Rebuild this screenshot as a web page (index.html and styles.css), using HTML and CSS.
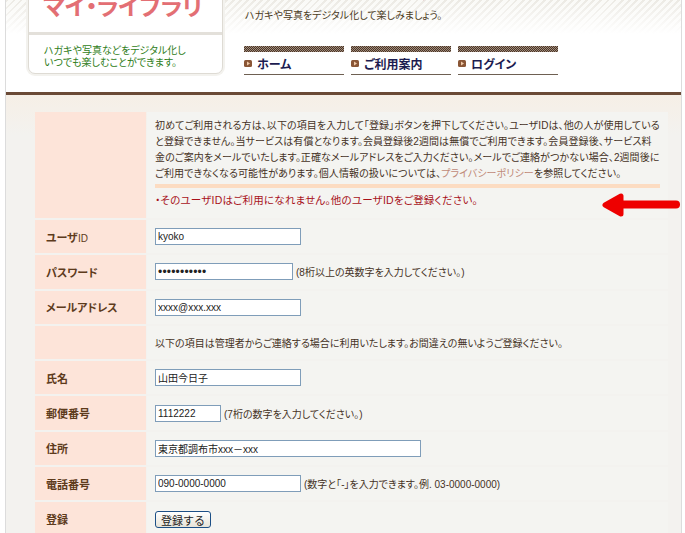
FILE: index.html
```html
<!DOCTYPE html>
<html lang="ja">
<head>
  <meta charset="UTF-8">
  <title>マイ・ライブラリ – 会員登録</title>
  <link rel="stylesheet" href="styles.css">
</head>
<body>
  <div class="page">
    <header class="site-header">
      <div class="logo">
        <div class="logo-title">マイ・ライブラリ</div>
        <p class="logo-text">ハガキや写真などをデジタル化し<br>いつでも楽しむことができます。</p>
      </div>
      <div class="header-right">
        <div class="catch">マイ・ライブラリへようこそ</div>
        <p class="lead">ハガキや写真をデジタル化して楽しみましょう。</p>
        <nav class="gnav">
          <a href="#"><span><svg width="8" height="7" viewBox="0 0 8 7"><rect width="8" height="7" rx="1.5" fill="#8a5636"/><path d="M3 1.5L6 3.5L3 5.5Z" fill="#f0c9a8"/></svg>ホーム</span></a>
          <a href="#"><span><svg width="8" height="7" viewBox="0 0 8 7"><rect width="8" height="7" rx="1.5" fill="#8a5636"/><path d="M3 1.5L6 3.5L3 5.5Z" fill="#f0c9a8"/></svg>ご利用案内</span></a>
          <a href="#"><span><svg width="8" height="7" viewBox="0 0 8 7"><rect width="8" height="7" rx="1.5" fill="#8a5636"/><path d="M3 1.5L6 3.5L3 5.5Z" fill="#f0c9a8"/></svg>ログイン</span></a>
        </nav>
      </div>
    </header>

    <main class="main">
      <form id="entryForm">
        <table class="entry">
          <tr>
            <th></th>
            <td class="intro">
              <p>初めてご利用される方は、以下の項目を入力して「登録」ボタンを押下してください。ユーザIDは、他の人が使用している<br>と登録できません。当サービスは有償となります。会員登録後2週間は無償でご利用できます。会員登録後、サービス料<br>金のご案内をメールでいたします。正確なメールアドレスをご入力ください。メールでご連絡がつかない場合、2週間後に<br>ご利用できなくなる可能性があります。個人情報の扱いについては、<a href="#" class="plink">プライバシーポリシー</a>を参照してください。</p>
              <div class="notice-bar"></div>
              <p class="error">・そのユーザIDはご利用になれません。他のユーザIDをご登録ください。</p>
            </td>
          </tr>
          <tr>
            <th>ユーザ<span class="latin">ID</span></th>
            <td><input class="field w146" type="text" name="userid" value="kyoko"></td>
          </tr>
          <tr>
            <th>パスワード</th>
            <td><input class="field w138 pw" type="password" name="password" value="kyoko123456"><span class="note">(8桁以上の英数字を入力してください。)</span></td>
          </tr>
          <tr>
            <th>メールアドレス</th>
            <td><input class="field w146" type="text" name="email" value="xxxx@xxx.xxx"></td>
          </tr>
          <tr>
            <th></th>
            <td>以下の項目は管理者からご連絡する場合に利用いたします。お間違えの無いようご登録ください。</td>
          </tr>
          <tr>
            <th>氏名</th>
            <td><input class="field w146" type="text" name="name" value="山田今日子"></td>
          </tr>
          <tr>
            <th>郵便番号</th>
            <td><input class="field w66" type="text" name="zip" value="1112222"><span class="note">(7桁の数字を入力してください。)</span></td>
          </tr>
          <tr>
            <th>住所</th>
            <td><input class="field w266" type="text" name="address" value="東京都調布市xxx－xxx"></td>
          </tr>
          <tr>
            <th>電話番号</th>
            <td><input class="field w146" type="text" name="tel" value="090-0000-0000"><span class="note">(数字と「-」を入力できます。例. 03-0000-0000)</span></td>
          </tr>
          <tr>
            <th>登録</th>
            <td><button class="btn" type="submit">登録する</button></td>
          </tr>
        </table>
      </form>
      <svg class="arrow" width="80" height="24" viewBox="0 0 80 24">
        <line x1="16" y1="11.5" x2="75" y2="11.5" stroke="#ee0000" stroke-width="8" stroke-linecap="round"/>
        <path d="M4 12L20 3L20 21Z" fill="#ee0000" stroke="#ee0000" stroke-width="5" stroke-linejoin="round"/>
      </svg>
    </main>
  </div>
</body>
</html>
```

FILE: styles.css
```css
* { box-sizing: border-box; }
body { margin:0; background:#fff; color:#4b3621; font-size:10px;
  font-family:"Liberation Sans", "Noto Sans CJK JP", sans-serif; font-feature-settings:"palt"; }
.page { margin:0 3px 0 5px; border-left:1px solid #dcdcdc; border-right:1px solid #dcdcdc;
  height:533px; overflow:hidden; }

/* header */
.site-header { display:flex; height:95px; overflow:hidden; border-bottom:3px solid #6b4a36;
  background:linear-gradient(rgba(255,255,255,0), #fff 34px),
    repeating-linear-gradient(135deg, #eceae4 0 2px, #fafaf7 2px 5px); }
.logo { width:195px; height:100px; margin:-26px 0 0 22px; background:#fff;
  border:1px solid #dedbd4; border-radius:0 0 7px 7px; box-shadow:0 0 0 2px #f3f2ee; }
.logo-title { display:flex; align-items:flex-end; height:60px; padding:0 0 13px 14px;
  border-bottom:3px solid #e3e0da; font-size:24px; line-height:24px; font-weight:bold;
  color:#e36f74; letter-spacing:-0.6px; }
.logo-text { margin:0; padding:10px 0 0 15px; line-height:12px; color:#2f7d20; }
.header-right { margin-left:21px; }
.catch { height:20px; margin-top:-18px; font-size:20px; line-height:20px; font-weight:bold; color:#cf3f48; }
.lead { margin:7px 0 0 1px; line-height:14px; color:#4a3a22; }
.gnav { display:flex; gap:7px; margin-top:23px; }
.gnav a { display:block; width:100px; border-bottom:1px solid #6e6052; text-decoration:none;
  color:#1c1c50; font-weight:bold; font-size:12px; }
.gnav a::before { content:""; display:block; height:6px;
  background:repeating-conic-gradient(#4a3426 0 25%, #a08c7c 0 50%) 0 0/2px 2px; }
.gnav span { display:flex; align-items:center; gap:5px; height:22px; }

/* form */
.main { position:relative; height:440px; padding:15px 0 0 28px;
  background:linear-gradient(#f6efe6, #f3f2ef 40px); }
.entry { border-spacing:1px 2px; width:635px; table-layout:fixed; }
.entry th { width:111px; padding:0 0 0 11px; background:#fde4d9; text-align:left;
  font-size:11px; color:#5d3b1c; }
.entry th .latin { font-weight:normal; font-size:10px; }
.entry td { height:33.3px; padding:0 8px; background:#f4f4f1; color:#45321f; }
.entry td.intro { height:106px; padding:6px 8px 0; vertical-align:top; }
.intro p { margin:0; line-height:16px; white-space:nowrap; letter-spacing:0.08px; }
.plink { color:#c08a78; text-decoration:none; }
.notice-bar { height:4px; margin-top:2px; background:#fcdcc2; }
.intro .error { margin-top:4px; line-height:17px; font-size:10.5px; letter-spacing:0.2px; color:#a8121a; }
.field { height:17px; margin:0; padding:0 2px; border:1px solid #7f9db9; background:#fff;
  font:10px "Liberation Sans", "Noto Sans CJK JP", sans-serif; color:#222; vertical-align:middle; }
.pw { font-size:12px; letter-spacing:0.2px; }
.w146 { width:146px; }
.w138 { width:138px; }
.w66 { width:66px; }
.w266 { width:266px; }
.note { margin-left:3px; vertical-align:middle; }
.btn { width:56px; height:17px; padding:0; border:1px solid #1c4f86; border-radius:3px;
  background:linear-gradient(#fff, #e6e3d8); font:11px "Noto Sans CJK JP", sans-serif; color:#222; }
.arrow { position:absolute; right:0; top:98px; }
```
